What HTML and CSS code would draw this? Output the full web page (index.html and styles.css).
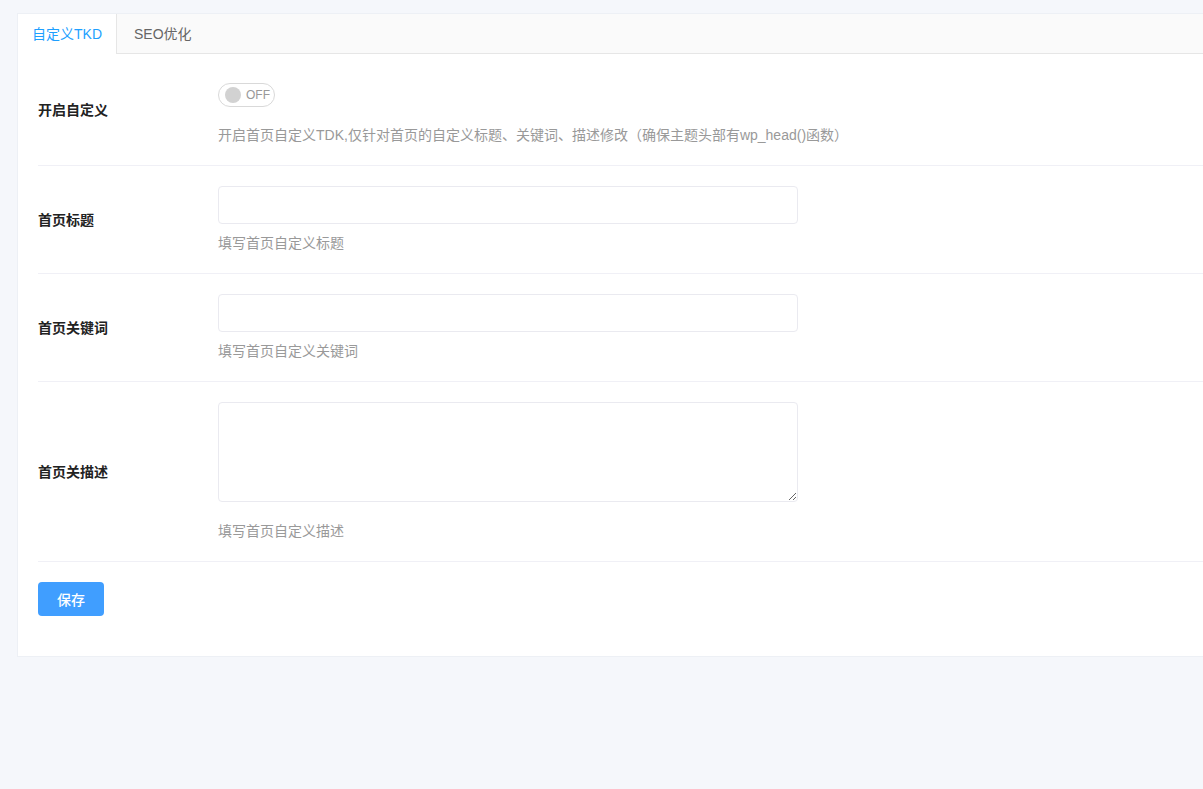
FILE: index.html
```html
<!DOCTYPE html>
<html lang="zh-CN">
<head>
<meta charset="utf-8">
<title>自定义TKD</title>
<link rel="stylesheet" href="styles.css">
</head>
<body>
<div class="card">
  <div class="tabs">
    <div class="tab active">自定义TKD</div>
    <div class="tab">SEO优化</div>
  </div>
  <div class="content">
    <div class="row">
      <div class="label label-switch">开启自定义</div>
      <div class="field">
        <div class="switch"><span class="knob"></span><span class="switch-text">OFF</span></div>
        <div class="help help-switch">开启首页自定义TDK,仅针对首页的自定义标题、关键词、描述修改（确保主题头部有wp_head()函数）</div>
      </div>
    </div>
    <div class="row">
      <div class="label">首页标题</div>
      <div class="field">
        <input class="input" type="text">
        <div class="help">填写首页自定义标题</div>
      </div>
    </div>
    <div class="row">
      <div class="label">首页关键词</div>
      <div class="field">
        <input class="input" type="text">
        <div class="help">填写首页自定义关键词</div>
      </div>
    </div>
    <div class="row">
      <div class="label">首页关描述</div>
      <div class="field">
        <textarea class="textarea"></textarea>
        <div class="help help-area">填写首页自定义描述</div>
      </div>
    </div>
    <div class="actions">
      <button class="btn" type="button">保存</button>
    </div>
  </div>
</div>
</body>
</html>
```

FILE: styles.css
```css
html, body {
  margin: 0;
  padding: 0;
}
body {
  background: #f5f7fb;
  font-family: "Liberation Sans", "Noto Sans CJK SC", sans-serif;
  font-size: 14px;
  color: #333;
  overflow: hidden;
  height: 789px;
}
.card {
  margin: 13px -40px 0 17px;
  background: #fff;
  border: 1px solid #edf0f5;
  border-right: none;
}
.tabs {
  display: flex;
  height: 39px;
  background: #fafafa;
  border-bottom: 1px solid #e6e6e6;
}
.tab {
  padding: 0 14px;
  line-height: 40px;
  height: 40px;
  color: #666;
  font-size: 14px;
  white-space: nowrap;
  box-sizing: border-box;
}
.tab.active {
  color: #1e9fff;
  background: #fff;
  border-right: 1px solid #e6e6e6;
}
.tab + .tab {
  padding-left: 17px;
}
.content {
  padding: 9px 40px 40px 20px;
}
.row {
  display: flex;
  align-items: center;
  padding: 20px 0;
  border-bottom: 1px solid #f0f0f6;
}
.label {
  width: 180px;
  flex: none;
  font-weight: bold;
  font-size: 14px;
  line-height: 20px;
  color: #222;
}
.label-switch {
  margin-bottom: 8px;
}
.field {
  flex: 1;
  display: flex;
  flex-direction: column;
  align-items: flex-start;
}
.switch {
  box-sizing: border-box;
  width: 57px;
  height: 24px;
  border: 1px solid #d9d9d9;
  border-radius: 12px;
  display: flex;
  align-items: center;
  padding-left: 6px;
}
.knob {
  width: 16px;
  height: 16px;
  border-radius: 50%;
  background: #d2d2d2;
}
.switch-text {
  margin-left: 5px;
  font-size: 12px;
  line-height: 14px;
  color: #999;
}
.help {
  color: #999;
  font-size: 14px;
  line-height: 20px;
  margin-top: 9px;
}
.help-switch {
  margin-top: 18px;
}
.help-area {
  margin-top: 19px;
}
.input {
  box-sizing: border-box;
  width: 580px;
  height: 38px;
  border: 1px solid #eaeaf0;
  border-radius: 4px;
  margin: 0;
  padding: 0 10px;
  font: inherit;
  outline: none;
  display: block;
}
.textarea {
  box-sizing: border-box;
  width: 580px;
  height: 100px;
  border: 1px solid #eaeaf0;
  border-radius: 4px;
  margin: 0;
  padding: 6px 10px;
  font: inherit;
  outline: none;
  display: block;
}
.actions {
  padding-top: 20px;
}
.btn {
  width: 66px;
  height: 34px;
  border: none;
  border-radius: 4px;
  background: #409eff;
  color: #fff;
  font-family: inherit;
  font-size: 14px;
  font-weight: 500;
  padding: 0;
  cursor: pointer;
  display: block;
}
```
